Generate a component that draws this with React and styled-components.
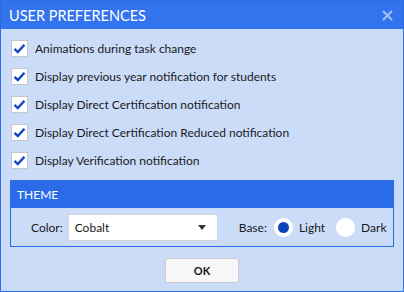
import React from 'react'
import styled, { createGlobalStyle } from 'styled-components'

const Global = createGlobalStyle`
body{
    margin: 0;
    font-family: "Lato", "Noto Sans", sans-serif;
}
`;

const Window = styled.div`
box-sizing: border-box;
width: 404px;
height: 292px;
display: flex;
flex-direction: column;
background-color: #cbdcf9;
border: 1px solid #2f6de6;
`;

const TitleBar = styled.div`
height: 28px;
display: flex;
align-items: center;
justify-content: space-between;
padding: 0 10px 0 8px;
background-color: #3473ee;
color: #fff;
font-size: 14.5px;
`;

const Close = styled.span`
display: flex;
`;

const OptionList = styled.div`
display: flex;
flex-direction: column;
gap: 11px;
padding: 11px 10px 0 10px;
`;

const Row = styled.label`
display: flex;
align-items: center;
gap: 7px;
font-size: 12px;
color: #1a1a1a;
`;

const Box = styled.span`
box-sizing: border-box;
width: 17px;
height: 17px;
display: flex;
align-items: center;
justify-content: center;
background-color: #fff;
border: 1px solid #c4c8d0;
`;

const Section = styled.div`
margin: 11px 9px 0 9px;
border: 1px solid #2a6be8;
`;

const SectionHead = styled.div`
height: 27px;
display: flex;
align-items: center;
padding-left: 6px;
background-color: #2a6be8;
color: #fff;
font-size: 12px;
`;

const SectionBody = styled.div`
height: 38px;
display: flex;
align-items: center;
padding: 0 0 0 20px;
font-size: 12px;
color: #1a1a1a;
`;

const Label = styled.span`
margin-right: ${p => p.gap || 5}px;
`;

const Select = styled.div`
box-sizing: border-box;
width: 150px;
height: 27px;
display: flex;
align-items: center;
justify-content: space-between;
padding: 0 11px 0 6px;
background-color: #fff;
border: 1px solid #d0d4da;
margin-right: 21px;
`;

const Caret = styled.span`
width: 0;
height: 0;
border-left: 4px solid transparent;
border-right: 4px solid transparent;
border-top: 5px solid #333;
`;

const Radio = styled.span`
box-sizing: border-box;
width: 19px;
height: 19px;
border-radius: 50%;
background-color: #fff;
display: flex;
align-items: center;
justify-content: center;
margin-right: 6px;
&::after{
    content: "";
    width: 11px;
    height: 11px;
    border-radius: 50%;
    background-color: ${p => p.checked ? '#0b43bb' : 'transparent'};
}
`;

const RadioText = styled.span`
margin-right: ${p => p.gap || 0}px;
`;

const Footer = styled.div`
flex: 1;
display: flex;
align-items: center;
justify-content: center;
`;

const Button = styled.button`
box-sizing: border-box;
width: 74px;
height: 25px;
margin-top: 2px;
background-color: #f7f7f7;
border: 1px solid #c9ccd2;
border-radius: 2px;
font-family: inherit;
font-size: 11px;
font-weight: 700;
color: #111;
`;

const Check = () => (
    <svg width="13" height="11" viewBox="0 0 13 11">
        <path d="M1.5 5.8 L4.8 9 L11.5 1.8" fill="none" stroke="#0f47c4" strokeWidth="2.4" />
    </svg>
)

const CloseIcon = () => (
    <svg width="11" height="11" viewBox="0 0 11 11">
        <path d="M1 1 L10 10 M10 1 L1 10" stroke="#a6c2f7" strokeWidth="2" />
    </svg>
)

const options = [
    'Animations during task change',
    'Display previous year notification for students',
    'Display Direct Certification notification',
    'Display Direct Certification Reduced notification',
    'Display Verification notification',
]

const App = () => {
    return (
        <>
            <Global />
            <Window>
                <TitleBar>
                    <span>USER PREFERENCES</span>
                    <Close><CloseIcon /></Close>
                </TitleBar>
                <OptionList>
                    {options.map(o => (
                        <Row key={o}><Box><Check /></Box>{o}</Row>
                    ))}
                </OptionList>
                <Section>
                    <SectionHead>THEME</SectionHead>
                    <SectionBody>
                        <Label>Color:</Label>
                        <Select><span>Cobalt</span><Caret /></Select>
                        <Label gap={7}>Base:</Label>
                        <Radio checked />
                        <RadioText gap={11}>Light</RadioText>
                        <Radio />
                        <RadioText>Dark</RadioText>
                    </SectionBody>
                </Section>
                <Footer>
                    <Button>OK</Button>
                </Footer>
            </Window>
        </>
    )
}

export default App;
